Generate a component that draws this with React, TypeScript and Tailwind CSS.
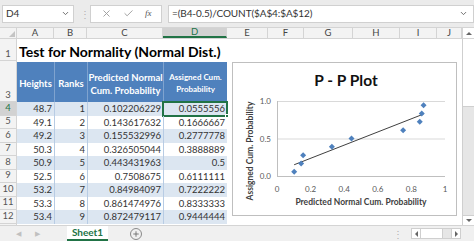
import { ChevronDown, X, Check, Plus } from 'lucide-react'

const font = "font-['Lato','Noto_Sans',sans-serif]"

const rows = [
  { n: 4, h: 48.7, r: 1, p: '0.102206229', a: '0.0555556' },
  { n: 5, h: 49.1, r: 2, p: '0.143617632', a: '0.1666667' },
  { n: 6, h: 49.2, r: 3, p: '0.155532996', a: '0.2777778' },
  { n: 7, h: 50.3, r: 4, p: '0.326505044', a: '0.3888889' },
  { n: 8, h: 50.9, r: 5, p: '0.443431963', a: '0.5' },
  { n: 9, h: 52.5, r: 6, p: '0.7508675', a: '0.6111111' },
  { n: 10, h: 53.2, r: 7, p: '0.84984097', a: '0.7222222' },
  { n: 11, h: 53.3, r: 8, p: '0.861474976', a: '0.8333333' },
  { n: 12, h: 53.4, r: 9, p: '0.872479117', a: '0.9444444' },
]

const colHeads = [
  { l: 'A', w: 'w-[37px]' },
  { l: 'B', w: 'w-[33px]' },
  { l: 'C', w: 'w-[76px]' },
  { l: 'D', w: 'w-[64px]' },
  { l: 'E', w: 'w-[41px]' },
  { l: 'F', w: 'w-[36px]' },
  { l: 'G', w: 'w-[49px]' },
  { l: 'H', w: 'w-[47px]' },
  { l: 'I', w: 'w-[37px]' },
  { l: 'J', w: 'w-[25px]' },
]

// chart geometry (inside the 225x154 chart box)
const X0 = 44
const X1 = 212
const Y1 = 38
const Y0 = 113
const px = (v: number) => X0 + v * (X1 - X0)
const py = (v: number) => Y0 - v * (Y0 - Y1)

function Diamond({ x, y }: { x: number; y: number }) {
  return <path d={`M${x} ${y - 3}L${x + 3} ${y}L${x} ${y + 3}L${x - 3} ${y}Z`} fill="#4f81bd" />
}

function Chart() {
  return (
    <div className="w-[225px] h-[154px] border border-[#bfbfbf] bg-white">
      <svg width="223" height="152" className="block">
        <text x="113" y="23" textAnchor="middle" fontSize="15.5" fontWeight="700" fill="#111" fontFamily="Lato, sans-serif">
          P - P Plot
        </text>
        <line x1={X0} y1={Y1 + 0.5} x2={X1} y2={Y1 + 0.5} stroke="#d9d9d9" />
        <line x1={X0} y1={py(0.5) + 0.5} x2={X1} y2={py(0.5) + 0.5} stroke="#d9d9d9" />
        <line x1={X0} y1={Y0 + 0.5} x2={X1} y2={Y0 + 0.5} stroke="#bfbfbf" />
        <line x1={X0 + 0.5} y1={Y1} x2={X0 + 0.5} y2={Y0} stroke="#bfbfbf" />
        {['1.0', '0.5', '0.0'].map((t, i) => (
          <text key={t} x="38" y={Y1 + i * 37.5 + 3} textAnchor="end" fontSize="8" fill="#595959" fontFamily="Lato, sans-serif">
            {t}
          </text>
        ))}
        {['0', '0.2', '0.4', '0.6', '0.8', '1'].map((t, i) => (
          <text key={t} x={px(i * 0.2)} y="129" textAnchor="middle" fontSize="8" fill="#595959" fontFamily="Lato, sans-serif">
            {t}
          </text>
        ))}
        <line x1={px(0.102)} y1={py(0.15)} x2={px(0.872)} y2={py(0.826)} stroke="#404040" strokeWidth="1" />
        {rows.map((r) => (
          <Diamond key={r.n} x={px(parseFloat(r.p))} y={py(parseFloat(r.a))} />
        ))}
        <text x="128" y="142" textAnchor="middle" fontSize="8.5" fontWeight="700" fill="#404040" fontFamily="Lato, sans-serif">
          Predicted Normal Cum. Probability
        </text>
        <text
          x="0"
          y="0"
          transform="translate(20 88) rotate(-90)"
          textAnchor="middle"
          fontSize="8.5"
          fontWeight="700"
          fill="#404040"
          fontFamily="Lato, sans-serif"
        >
          Assigned Cum. Probability
        </text>
      </svg>
    </div>
  )
}

function RowHead({ n, active, className }: { n?: number; active?: boolean; className: string }) {
  return (
    <div
      className={`w-[17px] shrink-0 flex justify-center border-r border-b border-[#d4d4d4] text-[9.5px] leading-none pb-[2px] ${
        active ? 'bg-[#d2d2d2] text-[#217346]' : 'bg-[#f3f3f3] text-[#555]'
      } ${className}`}
    >
      {n}
    </div>
  )
}

export default function App() {
  return (
    <div className={`w-[474px] h-[241px] overflow-hidden bg-white flex flex-col ${font}`}>
      {/* formula bar */}
      <div className="h-[28px] shrink-0 bg-[#ebebeb] flex items-center gap-[6px] pl-[2px] border-b border-[#d4d4d4]">
        <div className="w-[72px] h-[18px] bg-white border border-[#d0d0d0] flex items-center justify-between px-[3px]">
          <span className="text-[10px] text-[#333]">D4</span>
          <ChevronDown size={9} className="text-[#666]" strokeWidth={2.5} />
        </div>
        <span className="text-[10px] text-[#b0b0b0] leading-none w-[4px]">⋮</span>
        <div className="w-[72px] h-[18px] bg-white border border-[#d0d0d0] flex items-center justify-around px-[4px]">
          <X size={11} className="text-[#9a9a9a]" />
          <Check size={11} className="text-[#9a9a9a]" />
          <span className="text-[9px] italic text-[#555] font-['Liberation_Serif',serif]">fx</span>
        </div>
        <div className="flex-1 h-[18px] bg-white border border-[#d0d0d0] flex items-center justify-between pl-[3px] pr-[5px]">
          <span className="text-[10px] text-[#333] tracking-[-0.1px]">=(B4-0.5)/COUNT($A$4:$A$12)</span>
          <ChevronDown size={9} className="text-[#666]" strokeWidth={2.5} />
        </div>
      </div>

      {/* column headers */}
      <div className="h-[11px] shrink-0 flex bg-[#f3f3f3] border-b border-[#d4d4d4]">
        <div className="w-[17px] border-r border-[#d4d4d4] flex items-end justify-end p-[1px]">
          <div className="w-0 h-0 border-l-[6px] border-l-transparent border-b-[6px] border-b-[#c4c4c4]" />
        </div>
        {colHeads.map((c) => (
          <div
            key={c.l}
            className={`${c.w} shrink-0 border-r border-[#d4d4d4] flex items-center justify-center text-[9.5px] leading-none ${
              c.l === 'D' ? 'bg-[#d2d2d2] text-[#217346] border-b-2 border-b-[#217346]' : 'text-[#444]'
            }`}
          >
            {c.l}
          </div>
        ))}
        <div className="flex-1 flex items-center justify-center border-l border-[#d4d4d4] bg-white">
          <div className="w-0 h-0 border-x-[3px] border-x-transparent border-b-[3px] border-b-[#666]" />
        </div>
      </div>

      <div className="flex flex-1 min-h-0">
        {/* sheet cells */}
        <div className="w-[227px] shrink-0 flex flex-col">
          <div className="h-[22px] flex shrink-0">
            <RowHead n={1} className="items-end" />
            <div className="flex-1 flex items-end pl-[2px] text-[14px] leading-[18px] font-bold text-black whitespace-nowrap">
              Test for Normality (Normal Dist.)
            </div>
          </div>
          <div className="h-[41px] flex shrink-0">
            <RowHead n={3} className="items-end" />
            <div className="flex-1 flex bg-[#4f81bd] text-white font-bold mt-[1px]">
              <div className="w-[37px] flex items-center justify-center text-[9.5px] pt-[4px]">Heights</div>
              <div className="w-[33px] flex items-center justify-center text-[9.5px] pt-[4px] border-l border-[#7fa3cf]">Ranks</div>
              <div className="w-[76px] flex items-center justify-center text-center text-[9.5px] leading-[13px] pt-[4px] border-l border-[#7fa3cf] whitespace-nowrap">
                Predicted Normal
                <br />
                Cum. Probability
              </div>
              <div className="w-[64px] flex items-center justify-center text-center text-[8px] leading-[12px] pt-[2px] border-l border-[#7fa3cf] whitespace-nowrap">
                Assigned Cum.
                <br />
                Probability
              </div>
            </div>
          </div>
          {rows.map((r, i) => (
            <div key={r.n} className={`${i % 2 === 0 ? 'h-[14px]' : 'h-[13px]'} flex shrink-0`}>
              <RowHead n={r.n} active={r.n === 4} className="items-center pb-0" />
              <div
                className={`flex-1 flex text-[9.5px] text-[#333] leading-none ${
                  i % 2 === 0 ? 'bg-[#dce6f1]' : 'bg-white'
                }`}
              >
                <div className="w-[37px] flex items-center justify-end pr-[2px]">{r.h}</div>
                <div className="w-[33px] flex items-center justify-end pr-[2px] border-l border-[#b8cce4]">{r.r}</div>
                <div className="w-[76px] flex items-center justify-end pr-[2px] border-l border-[#b8cce4]">{r.p}</div>
                <div
                  className={`w-[64px] flex items-center justify-end pr-[2px] border-l border-[#b8cce4] relative ${
                    r.n === 4 ? 'outline-2 outline-[#217346] -outline-offset-1' : ''
                  }`}
                >
                  {r.a}
                  {r.n === 4 && (
                    <div className="absolute -right-[2px] -bottom-[2px] w-[4px] h-[4px] bg-[#217346] border border-white" />
                  )}
                </div>
              </div>
            </div>
          ))}
          <div className="flex-1 flex">
            <RowHead className="" />
          </div>
        </div>

        {/* chart region */}
        <div className="flex-1 pl-[5px] pt-[23px]">
          <Chart />
        </div>

        {/* vertical scrollbar */}
        <div className="w-[12px] shrink-0 flex flex-col bg-[#e6e6e6] border-l border-[#cfcfcf]">
          <div className="h-[68px] bg-white border-b border-[#cfcfcf]" />
          <div className="flex-1" />
          <div className="h-[10px] flex items-center justify-center bg-white border-t border-[#cfcfcf]">
            <div className="w-0 h-0 border-x-[3px] border-x-transparent border-t-[3px] border-t-[#666]" />
          </div>
        </div>
      </div>

      {/* sheet tabs */}
      <div className="h-[16px] shrink-0 flex items-stretch bg-[#f0f0f0] border-t border-[#d4d4d4] text-[#c0c0c0]">
        <div className="w-[67px] flex items-center gap-[14px] pl-[16px] text-[7px]">
          <span>◀</span>
          <span>▶</span>
        </div>
        <div className="w-[41px] bg-white border-b-2 border-[#217346] flex items-center justify-center text-[10px] font-bold text-[#217346]">
          Sheet1
        </div>
        <div className="w-[56px] flex items-center justify-center">
          <div className="w-[12px] h-[12px] rounded-full border border-[#8a8a8a] flex items-center justify-center">
            <Plus size={8} className="text-[#666]" strokeWidth={2.5} />
          </div>
        </div>
        <div className="flex-1" />
        <div className="flex items-center gap-[8px] pr-[13px]">
          <span className="text-[10px] text-[#b0b0b0] leading-none">⋮</span>
          <div className="flex items-center h-[11px] border border-[#cfcfcf] bg-[#e6e6e6]">
            <div className="w-[9px] h-full flex items-center justify-center bg-white border-r border-[#cfcfcf]">
              <div className="w-0 h-0 border-y-[3px] border-y-transparent border-r-[3px] border-r-[#666]" />
            </div>
            <div className="w-[22px] h-full bg-white border-r border-[#cfcfcf]" />
            <div className="w-[8px] h-full" />
            <div className="w-[9px] h-full flex items-center justify-center bg-white border-l border-[#cfcfcf]">
              <div className="w-0 h-0 border-y-[3px] border-y-transparent border-l-[3px] border-l-[#666]" />
            </div>
          </div>
        </div>
      </div>
    </div>
  )
}
